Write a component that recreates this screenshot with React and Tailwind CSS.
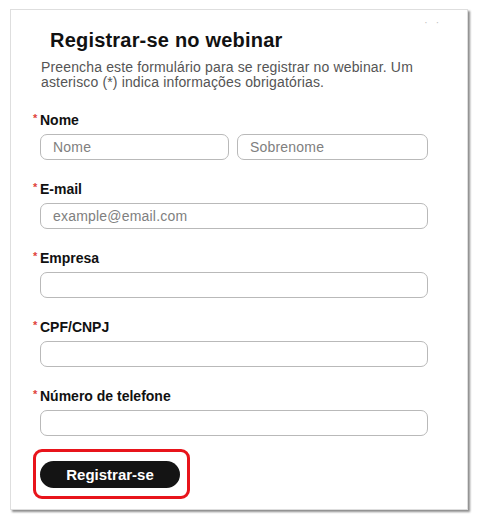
import React from 'react';

const fields = [
  { label: 'E-mail', placeholder: 'example@email.com' },
  { label: 'Empresa', placeholder: '' },
  { label: 'CPF/CNPJ', placeholder: '' },
  { label: 'Número de telefone', placeholder: '' },
];

function Label({ children }) {
  return (
    <div className="-ml-[7px] flex items-start text-[14px] leading-[16px] font-bold text-[#111]">
      <span className="text-[#e0433a] text-[11px] leading-[12px] w-[7px]">*</span>
      {children}
    </div>
  );
}

function Input({ placeholder, className = '' }) {
  return (
    <input
      placeholder={placeholder}
      className={`h-[26px] rounded-[7px] border border-[#b9b9b9] bg-white px-[12px] text-[14px] tracking-[0.2px] text-[#333] placeholder:text-[#808080] outline-none ${className}`}
    />
  );
}

export default function App() {
  return (
    <div className="w-[486px] h-[526px] bg-white pt-[9px] pl-[10px]" style={{ fontFamily: '"Liberation Sans", Arial, sans-serif' }}>
      <div className="relative w-[458px] h-[501px] bg-white border border-[#dedede] shadow-[2px_2px_2px_rgba(0,0,0,0.45)] pl-[29px] pr-[39px] pt-[18px]">
        {/* botão fechar (quase invisível) */}
        <div className="absolute top-[8px] right-[20px] text-[10px] leading-[10px] tracking-[8px] text-[#bdbdbd]">··</div>

        <h1 className="ml-[10px] text-[20px] leading-[24px] font-bold tracking-[0.2px] text-[#111]">Registrar-se no webinar</h1>
        <p className="mt-[8px] ml-[1px] w-[390px] text-[14px] leading-[15px] tracking-[0.15px] text-[#555]">
          Preencha este formulário para se registrar no webinar. Um asterisco (*) indica informações obrigatórias.
        </p>

        <div className="mt-[22px]">
          <Label>Nome</Label>
          <div className="mt-[6px] flex gap-[8px]">
            <Input placeholder="Nome" className="w-[189px]" />
            <Input placeholder="Sobrenome" className="w-[191px]" />
          </div>
        </div>

        {fields.map((f) => (
          <div key={f.label} className="mt-[21px]">
            <Label>{f.label}</Label>
            <Input placeholder={f.placeholder} className="mt-[6px] w-[388px] block" />
          </div>
        ))}

        <div className="mt-[13px] -ml-[7px] inline-block rounded-[9px] border-[3px] border-[#e8141b] pl-[4px] pr-[7px] pt-[9px] pb-[8px]">
          <button className="w-[140px] h-[27px] rounded-full bg-[#141414] text-white text-[15px] font-bold leading-[27px]">
            Registrar-se
          </button>
        </div>
      </div>
    </div>
  );
}
